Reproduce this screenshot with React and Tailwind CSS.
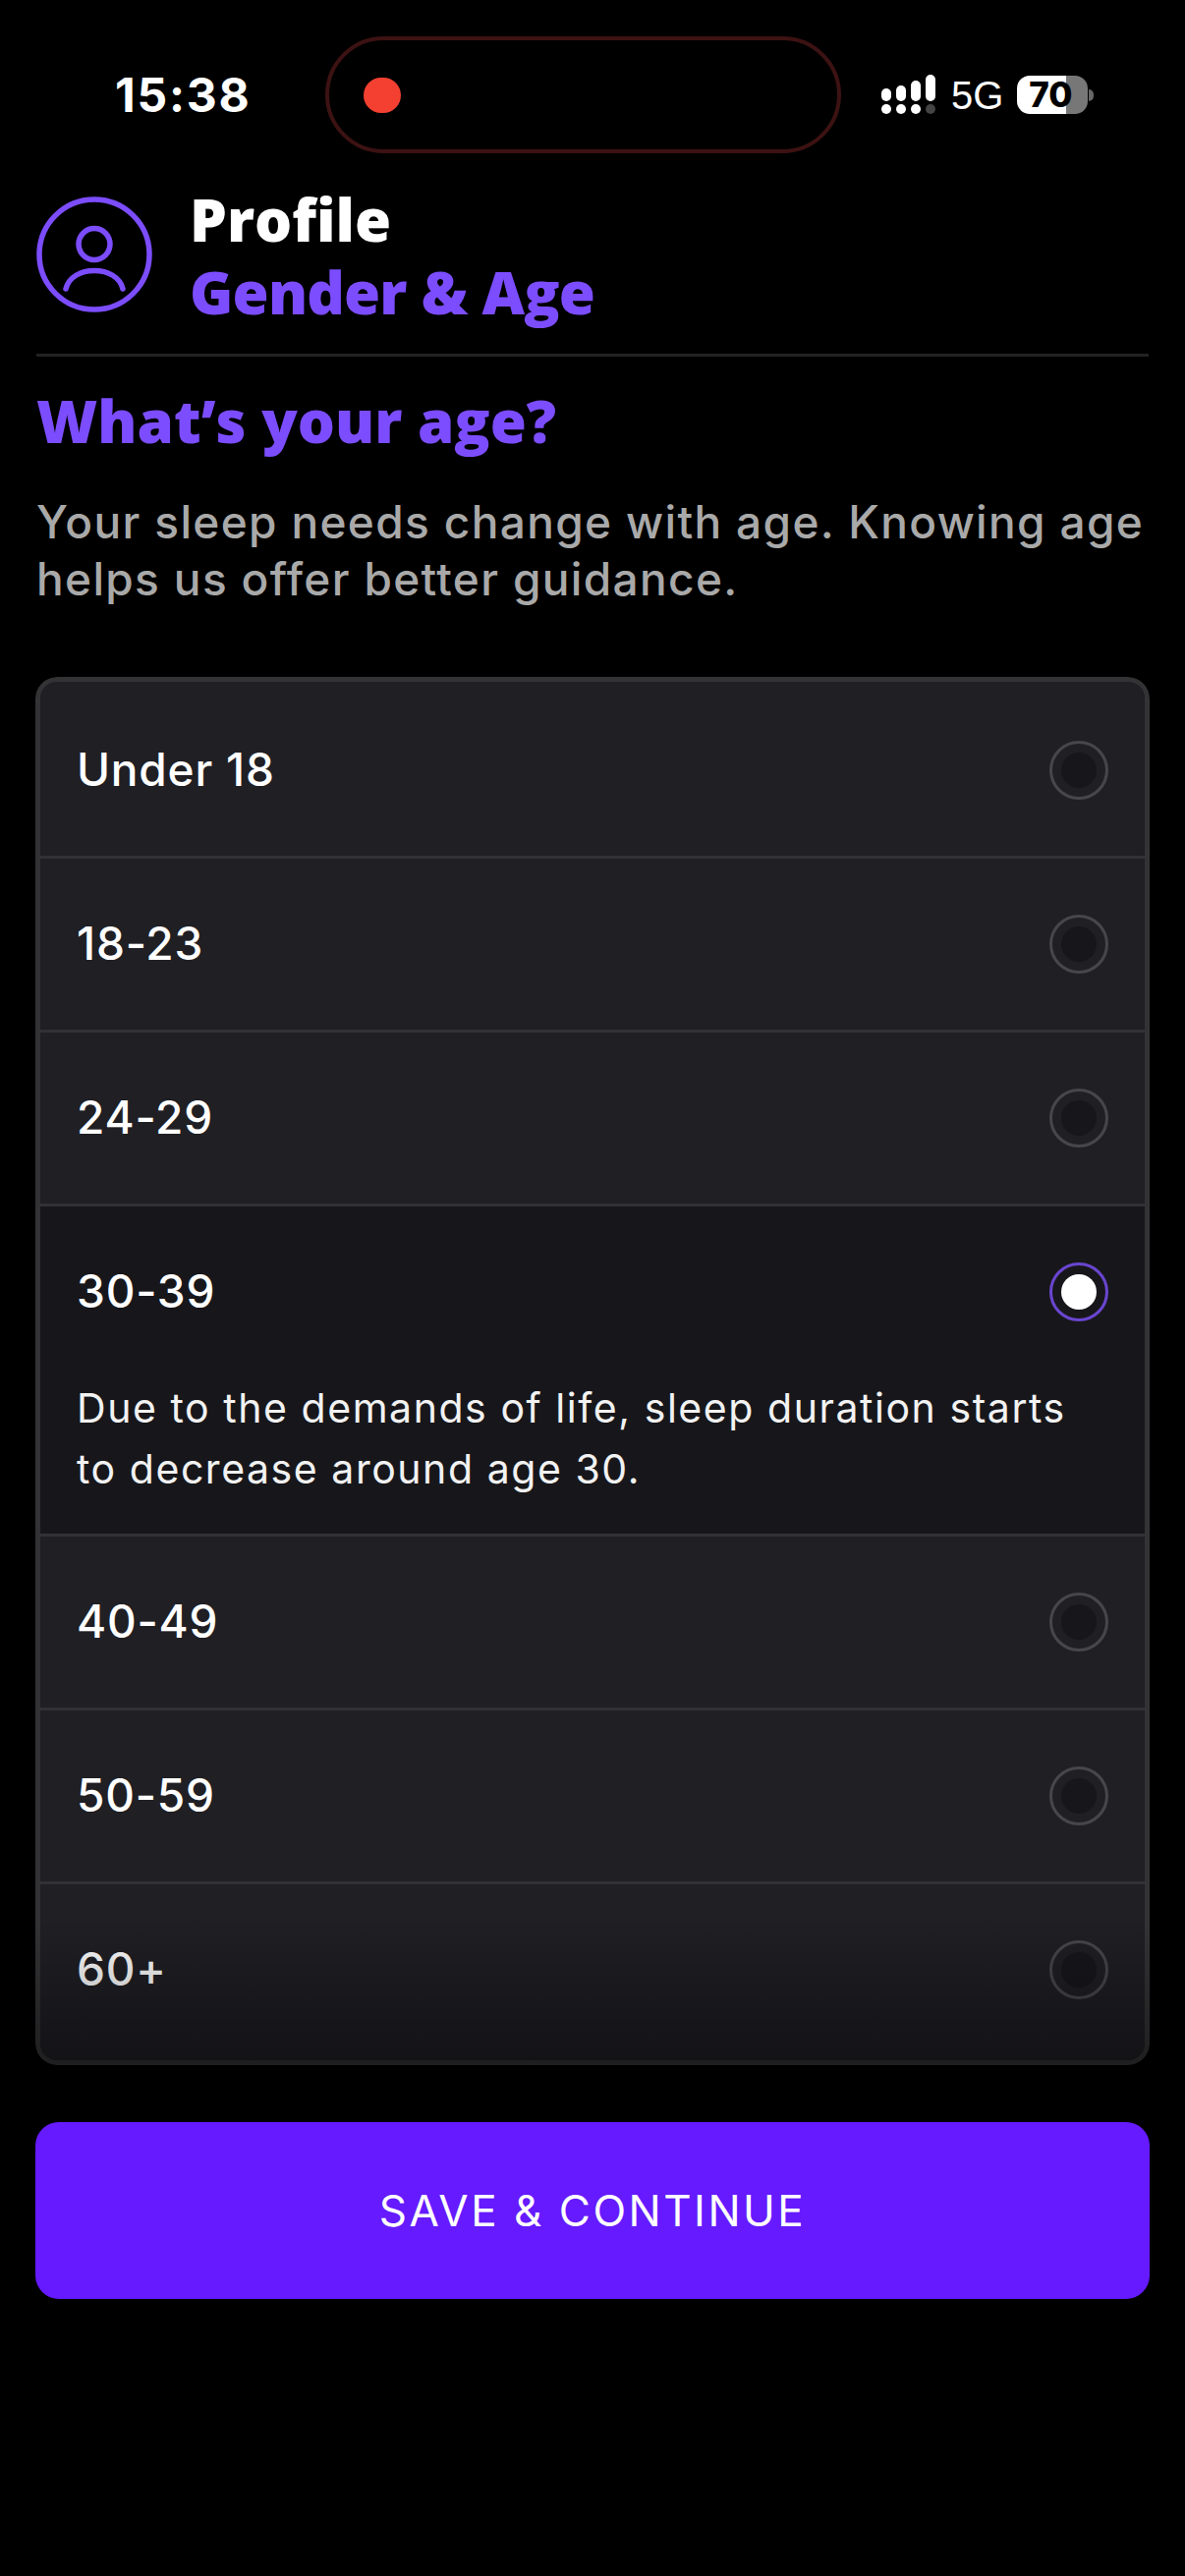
import React from "react";

const rows = [
  { label: "Under 18" },
  { label: "18-23" },
  { label: "24-29" },
  { label: "30-39", selected: true, note: "Due to the demands of life, sleep duration starts to decrease around age 30." },
  { label: "40-49" },
  { label: "50-59" },
  { label: "60+" },
];

function Signal() {
  return (
    <svg width="60" height="42" viewBox="0 0 60 42" className="block">
      <rect x="0" y="14" width="10" height="13" rx="5" fill="#fff" />
      <rect x="15" y="11" width="10" height="16" rx="5" fill="#fff" />
      <rect x="30" y="6" width="10" height="21" rx="5" fill="#fff" />
      <rect x="45" y="0" width="10" height="27" rx="5" fill="#fff" />
      <circle cx="5" cy="35" r="5" fill="#fff" />
      <circle cx="20" cy="35" r="5" fill="#fff" />
      <circle cx="35" cy="35" r="5" fill="#fff" />
      <circle cx="50" cy="35" r="5" fill="#444" />
    </svg>
  );
}

function Avatar() {
  return (
    <svg width="118" height="118" viewBox="0 0 118 118" fill="none" stroke="#7c4dff" strokeWidth="5.5" className="block shrink-0">
      <circle cx="59" cy="59" r="56" />
      <circle cx="59" cy="48.5" r="16" />
      <path d="M30 94 C33 82 45 75.5 59 75.5 C73 75.5 85 82 88 94" strokeLinecap="round" />
    </svg>
  );
}

function Radio({ selected }) {
  return (
    <span
      className={
        "flex h-[60px] w-[60px] shrink-0 items-center justify-center rounded-full border-[3px] " +
        (selected ? "border-[#6a45d0]" : "border-[#47474b]")
      }
    >
      <span className={"h-9 w-9 rounded-full " + (selected ? "bg-white" : "bg-[#17171b]")} />
    </span>
  );
}

function Row({ label, selected, note, last }) {
  return (
    <div className={(last ? "" : "border-b-[3px] border-[#323235] ") + (selected ? "bg-[#17171b]" : "bg-[#1f1f24]")}>
      <div className="flex h-[174px] items-center justify-between pl-[37px] pr-[37px]">
        <span className="-mt-[2px] text-[46px] font-medium leading-none tracking-[0.8px] text-white">{label}</span>
        <Radio selected={selected} />
      </div>
      {note && (
        <p className="pb-[35px] pl-[37px] pr-[50px] text-[41px] leading-[62px] tracking-[1.55px] text-[#f2f2f2]">
          {note}
        </p>
      )}
    </div>
  );
}

export default function App() {
  return (
    <div className="h-[2622px] w-[1206px] overflow-hidden bg-black font-['Inter','Liberation_Sans',sans-serif] text-white">
      <div className="flex h-[193px] items-center pb-[0px]">
        <span className="ml-[117px] w-[214px] text-[48px] font-bold leading-none tracking-[1.8px]">15:38</span>
        <div className="flex h-[119px] w-[525px] items-center rounded-full border-[4px] border-[#3d1212] pl-[35px]">
          <span className="h-9 w-[38px] rounded-full bg-[#f44030]" />
        </div>
        <div className="ml-[41px] flex items-center">
          <Signal />
          <span className="ml-[11px] font-['Liberation_Sans',sans-serif] text-[40px] leading-none">5G</span>
          <span className="ml-[14px] flex h-[39px] w-[72px] items-center justify-center rounded-[13px] bg-[linear-gradient(90deg,#fff_0,#fff_50px,#777_50px,#777_100%)] pr-[4px] font-['Inter',sans-serif] text-[35px] font-extrabold leading-none text-black">
            70
          </span>
          <span className="ml-[1px] h-[12px] w-[5px] rounded-r-full bg-[#666]" />
        </div>
      </div>

      <header className="mx-[37px] flex h-[170px] items-start gap-[38px] border-b-[3px] border-[#222]">
        <div className="pt-[7px]"><Avatar /></div>
        <div className="-mt-[7px] font-['Open_Sans',sans-serif] text-[60px] font-extrabold leading-[74px]">
          <div className="text-white">Profile</div>
          <div className="tracking-[-0.8px] text-[#7c4dff]">Gender &amp; Age</div>
        </div>
      </header>

      <main className="mx-[36px]">
        <h1 className="ml-[1px] mt-[28px] font-['Open_Sans',sans-serif] text-[60px] font-extrabold leading-[74px] text-[#7c4dff]">
          What’s your age?
        </h1>
        <p className="ml-[1px] mt-[37px] text-[46px] font-medium leading-[58px] tracking-[1.35px] text-[#a9a9a9]">
          Your sleep needs change with age. Knowing age helps us offer better guidance.
        </p>

        <div className="relative mt-[71px] overflow-hidden rounded-[22px]">
          <section className="overflow-hidden rounded-[22px] border-[5px] border-[#333335] bg-[#1f1f24] pt-[3px]">
            {rows.map((r, i) => (
              <Row key={r.label} {...r} last={i === rows.length - 1} />
            ))}
            <div className="h-[5px] bg-[#1f1f24]" />
          </section>
          <div className="pointer-events-none absolute inset-x-0 bottom-0 h-[150px] bg-gradient-to-b from-transparent to-black/40" />
        </div>

        <button className="mt-[58px] flex h-[180px] w-full items-center justify-center rounded-[24px] bg-[#651aff] text-[44px] uppercase tracking-[2.5px] text-white">
          Save &amp; Continue
        </button>
      </main>
    </div>
  );
}
